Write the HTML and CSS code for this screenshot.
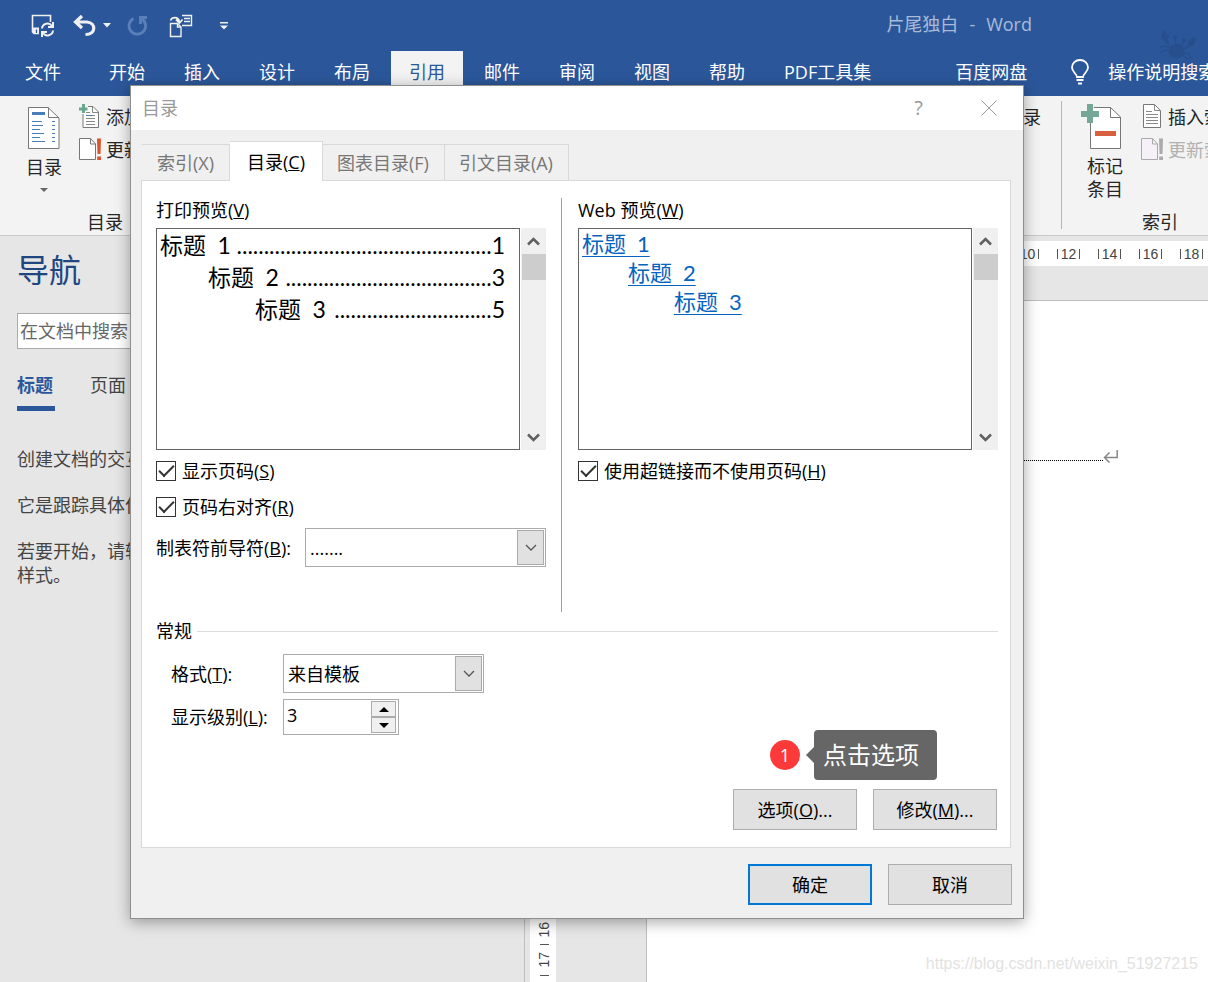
FILE: index.html
```html
<!DOCTYPE html>
<html lang="zh-CN">
<head>
<meta charset="utf-8">
<title>片尾独白 - Word</title>
<link rel="stylesheet" href="styles.css">
</head>
<body>
<div class="app">
  <header class="titlebar">
    <div class="quick">
      <button class="qbtn" aria-label="保存"><svg width="24" height="24" viewBox="0 0 24 24" fill="none" stroke="#f0f0f0" stroke-width="1.600"><path d="M9 19.500H4L2.500 18V1.500H20.500V8"/><path d="M2.500 13.500H9V20H4.500L2.500 18Z" fill="#f0f0f0" stroke="none"/><path d="M6.500 15.500V19" stroke="#2b579a" stroke-width="1.200"/><path d="M12 14.500a5.500 5.500 0 0 1 10-2.500M23 8V13H18M23 16.500a5.500 5.500 0 0 1-10 2.500M12 23V18H17" stroke-width="2"/></svg></button>
      <button class="qbtn" aria-label="撤消"><svg width="24" height="24" viewBox="0 0 24 24" fill="none" stroke="#f0f0f0"><path d="M9 2 2.500 8 9 14M3 8H14C23.500 9 23 20.500 12.500 20.500" stroke-width="3.200"/></svg></button>
      <button class="qbtn" aria-label="撤消列表"><svg width="8" height="5" viewBox="0 0 8 5"><path d="M0 0H8L4 4.500Z" fill="#f0f0f0"/></svg></button>
      <button class="qbtn redo" aria-label="重复" disabled><svg width="22" height="22" viewBox="0 0 22 22" fill="none" stroke="#5b7fb8" stroke-width="2.800"><path d="M6.500 3.500A8.300 8.300 0 1 0 15 4"/><path d="M20 2.500H13.500V9" /></svg></button>
      <button class="qbtn clip" aria-label="粘贴到"><svg width="24" height="24" viewBox="0 0 24 24" fill="none" stroke="#f0f0f0" stroke-width="1.400"><path d="M1.500 9.500H8.500L12 13V22.500H1.500Z"/><path d="M8.500 9.500V13H12M13 1.500H22.500V11.500H13"/><path d="M15 4.500H21M15 7.500H21" stroke-width="1.600"/><path d="M1.500 6.500C3 3 9 2 10.500 8M7 5.500 10.500 9 13.500 5.500" stroke-width="1.800"/></svg></button>
      <button class="qbtn more" aria-label="自定义快速访问工具栏"><svg width="8" height="8" viewBox="0 0 8 8"><path d="M0 0H8V1.500H0ZM0 3.500H8L4 7.500Z" fill="#f0f0f0"/></svg></button>
    </div>
    <div class="doc-title"><span>片尾独白</span><span>-</span><span>Word</span></div>
    <svg class="crab" width="38" height="32" viewBox="0 0 38 32" fill="#274f8d"><path d="M11 25C10 18 14 14 20 15 26 16 28 22 25 27 20 31 13 29 11 25Z"/><path d="M7 1C3 3 2 9 6 11L9 15 12 17 11 13 9 10C12 8 11 5 9 5L8 8ZM37 8C32 9 29 13 30 16L26 19 27 21 32 17C37 17 38 13 37 8L33 13Z"/><circle cx="17" cy="8" r="2"/><circle cx="26" cy="11" r="2"/><path d="M17 9 18 15M26 12 24 16M12 19 6 17 1 19M12 22 6 21 2 24M25 23 31 25 33 30M24 26 28 28 29 31" fill="none" stroke="#274f8d" stroke-width="1.500"/></svg>
  </header>
  <nav class="tabs">
    <button class="tab file">文件</button>
    <button class="tab">开始</button>
    <button class="tab">插入</button>
    <button class="tab">设计</button>
    <button class="tab">布局</button>
    <button class="tab active">引用</button>
    <button class="tab">邮件</button>
    <button class="tab">审阅</button>
    <button class="tab">视图</button>
    <button class="tab">帮助</button>
    <button class="tab pdf">PDF工具集</button>
    <button class="tab">百度网盘</button>
    <button class="tab tell"><svg width="20" height="26" viewBox="0 0 20 26" fill="none" stroke="#fff" stroke-width="1.800"><path d="M7 18C7 15 2 13 2 8.500A8 7.500 0 0 1 18 8.500C18 13 13 15 13 18ZM6.500 21H13.500M8 24.500H12"/></svg>操作说明搜索</button>
  </nav>
  <div class="ribbon">
    <section class="group toc">
      <div class="tools">
        <button class="big"><svg width="34" height="44" viewBox="0 0 34 44" fill="none"><path d="M1.500 1.500H21L32 12V42.500H1.500Z" fill="#fff" stroke="#777"/><path d="M21.500 1.500V11.500H32" stroke="#777"/><path d="M5 6H18V9H5Z" fill="#4a7ebb"/><path d="M5 15.500H15M5 19.500H16M5 23.500H13M5 27.500H17M5 31.500H13M5 35.500H18M25 15.500H28M25 19.500H28M25 23.500H28M25 27.500H28M25 31.500H28M25 35.500H28" stroke="#4a7ebb"/></svg><span>目录</span><svg class="drop" width="8" height="4" viewBox="0 0 8 4"><path d="M0 0H8L4 4Z" fill="#666"/></svg></button>
        <div class="small-list">
          <button class="small"><svg width="22" height="25" viewBox="0 0 22 25" fill="none"><path d="M4 10V23.500H19.500V8L14 2.500H9" fill="#fff" stroke="#777"/><path d="M13.500 3V8.500H19M7 8.500H11M7 11.500H16M7 14.500H16M7 17.500H16M7 20.500H16" stroke="#888"/><path d="M7 11.500H13" stroke="#4a7ebb"/><path d="M3 0H6V3.500H8.500V6.500H6V9H3V6.500H0V3.500H3Z" fill="#69a790"/></svg>添加</button>
          <button class="small"><svg width="22" height="25" viewBox="0 0 22 25" fill="none"><path d="M.500 1.500H11.500L16.500 7V22.500H.500Z" fill="#fff" stroke="#777"/><path d="M11.500 1.500V7H16.500" stroke="#777"/><path d="M18 1.500H22L21.500 17H18.500ZM18.200 19.500H22V23H18.200Z" fill="#d9532c"/></svg>更新</button>
        </div>
      </div>
      <div class="caption">目录</div>
    </section>
    <section class="group middle"><button class="small">录</button></section>
    <section class="group index">
      <div class="tools">
        <button class="big"><svg width="42" height="47" viewBox="0 0 42 47" fill="none"><path d="M10.500 18V45.500H40.500V14L30.500 4.500H14" fill="#fff" stroke="#777"/><path d="M30.500 4.500V14.500H40.500" stroke="#777"/><path d="M7 1H13V8H19V14H13V20H7V14H1V8H7Z" fill="#74a795"/><path d="M15 28H36V33H15Z" fill="#d9603f"/></svg><span>标记<br>条目</span></button>
        <div class="small-list">
          <button class="small"><svg width="22" height="25" viewBox="0 0 22 25" fill="none"><path d="M2.500.500H13.500L19.500 6.500V23.500H2.500Z" fill="#fff" stroke="#777"/><path d="M13.500.500V6.500H19.500M5 7.500H11M5 10.500H17M5 13.500H17M5 16.500H17M5 19.500H17" stroke="#888"/></svg>插入索引</button>
          <button class="small" disabled><svg width="22" height="25" viewBox="0 0 22 25" fill="none"><path d="M.500 1.500H11.500L16.500 7V22.500H.500Z" fill="#f6f1f8" stroke="#aaa"/><path d="M11.500 1.500V7H16.500" stroke="#aaa"/><path d="M18 1.500H22L21.500 17H18.500ZM18.200 19.500H22V23H18.200Z" fill="#aaa"/></svg>更新索引</button>
        </div>
      </div>
      <div class="caption">索引</div>
    </section>
  </div>
  <div class="workspace">
    <aside class="nav-pane">
      <h2 class="nav-title">导航</h2>
      <input class="nav-search" type="text" placeholder="在文档中搜索" aria-label="在文档中搜索">
      <div class="nav-tabs"><button class="nav-tab current">标题</button><button class="nav-tab">页面</button></div>
      <p>创建文档的交互</p>
      <p>它是跟踪具体位</p>
      <p>若要开始，请转<br>样式。</p>
    </aside>
    <main class="editor">
      <div class="h-ruler"><span>10</span><span>12</span><span>14</span><span>16</span><span>18</span></div>
      <div class="canvas">
        <div class="v-ruler"><span>16</span><i></i><span>17</span><i></i></div>
        <article class="sheet">
          <div class="toc-line"><span class="leader"></span><svg width="16" height="14" viewBox="0 0 16 14" fill="none" stroke="#888" stroke-width="1.500"><path d="M14.200 0V7.500H2M6.500 2.500 1.500 7.500 6.500 12.500"/></svg></div>
        </article>
      </div>
    </main>
  </div>

  <div class="dialog" role="dialog" aria-label="目录">
    <div class="dlg-title"><span>目录</span><button class="dlg-help">?</button><button class="dlg-close" aria-label="关闭"><svg width="16" height="16" viewBox="0 0 16 16" fill="none" stroke="#999"><path d="M.500.500 15.500 15.500M15.500.500.500 15.500"/></svg></button></div>
    <div class="dlg-tabs">
      <button class="dtab">索引(X)</button><button class="dtab on">目录(<u>C</u>)</button><button class="dtab">图表目录(F)</button><button class="dtab">引文目录(A)</button>
    </div>
    <div class="panel">
      <div class="columns">
        <section class="col print">
          <h3>打印预览(<u>V</u>)</h3>
          <div class="preview">
            <div class="list">
              <div class="entry"><span>标题&ensp;1</span><span class="dots">...............................................</span><span>1</span></div>
              <div class="entry l2"><span>标题&ensp;2</span><span class="dots">......................................</span><span>3</span></div>
              <div class="entry l3"><span>标题&ensp;3</span><span class="dots">.............................</span><span>5</span></div>
            </div>
            <div class="scroll"><svg width="13" height="9" viewBox="0 0 13 9" fill="none" stroke="#606060" stroke-width="2.500"><path d="M1 7.500 6.500 2 12 7.500"/></svg><div class="thumb"></div><svg class="down" width="13" height="9" viewBox="0 0 13 9" fill="none" stroke="#606060" stroke-width="2.500"><path d="M1 1.500 6.500 7 12 1.500"/></svg></div>
          </div>
          <label class="check"><input type="checkbox" checked><span>显示页码(<u>S</u>)</span></label>
          <label class="check"><input type="checkbox" checked><span>页码右对齐(<u>R</u>)</span></label>
          <div class="leader-row"><label for="lead">制表符前导符(<u>B</u>):</label>
            <div class="combo"><select id="lead"><option>.......</option></select><span class="arrow"><svg width="12" height="8" viewBox="0 0 12 8" fill="none" stroke="#555" stroke-width="1.300"><path d="M1 1 6 6 11 1"/></svg></span></div></div>
        </section>
        <section class="col web">
          <h3>Web 预览(<u>W</u>)</h3>
          <div class="preview">
            <div class="list links">
              <a href="#h1">标题&ensp;1</a>
              <a class="l2" href="#h2">标题&ensp;2</a>
              <a class="l3" href="#h3">标题&ensp;3</a>
            </div>
            <div class="scroll"><svg width="13" height="9" viewBox="0 0 13 9" fill="none" stroke="#606060" stroke-width="2.500"><path d="M1 7.500 6.500 2 12 7.500"/></svg><div class="thumb"></div><svg class="down" width="13" height="9" viewBox="0 0 13 9" fill="none" stroke="#606060" stroke-width="2.500"><path d="M1 1.500 6.500 7 12 1.500"/></svg></div>
          </div>
          <label class="check"><input type="checkbox" checked><span>使用超链接而不使用页码(<u>H</u>)</span></label>
        </section>
      </div>
      <div class="general">
        <h3 class="rule-title">常规</h3>
        <div class="form">
          <label for="fmt">格式(<u>T</u>):</label>
          <div class="combo fmt"><select id="fmt"><option>来自模板</option></select><span class="arrow"><svg width="12" height="8" viewBox="0 0 12 8" fill="none" stroke="#555" stroke-width="1.300"><path d="M1 1 6 6 11 1"/></svg></span></div>
          <label for="lvl">显示级别(<u>L</u>):</label>
          <div class="spin"><input id="lvl" type="text" value="3"><div class="steps"><button aria-label="增加"><svg width="10" height="5" viewBox="0 0 10 5"><path d="M0 5 5 0 10 5Z"/></svg></button><button aria-label="减少"><svg width="10" height="5" viewBox="0 0 10 5"><path d="M0 0 5 5 10 0Z"/></svg></button></div></div>
        </div>
      </div>
      <div class="actions">
        <button class="btn">选项(<u>O</u>)...</button><button class="btn">修改(<u>M</u>)...</button>
        <div class="callout"><span class="num">1</span><span class="tip">点击选项</span></div>
      </div>
    </div>
    <div class="footer"><button class="btn primary">确定</button><button class="btn">取消</button></div>
  </div>
  <div class="watermark">https://blog.csdn.net/weixin_51927215</div>
</div>
</body>
</html>
```
FILE: styles.css
```css
* { box-sizing: border-box; }
body { margin: 0; }
body, button, input, select {
  font-family: "Open Sans", "Noto Sans CJK SC", sans-serif;
  font-size: 18px;
  line-height: 24px;
  color: #262626;
}
button { border: 0; padding: 0; background: none; }
svg { display: block; flex: none; }
h2, h3, p { margin: 0; font-weight: 400; }
h3 { font-size: 18px; line-height: 24px; color: #000; }

.app {
  position: relative;
  display: flex;
  flex-direction: column;
  min-height: 100vh;
  overflow: hidden;
}

/* title bar and ribbon tabs */
.titlebar {
  position: relative;
  display: flex;
  align-items: center;
  justify-content: space-between;
  height: 51px;
  padding: 0 176px 0 30px;
  background: #2b579a;
}
.quick { display: flex; align-items: center; }
.qbtn { display: flex; margin-right: 6px; }
.qbtn:first-child { margin-right: 19px; }
.redo { margin: 0 20px 0 10px; }
.clip { margin-right: 27px; }
.doc-title { display: flex; gap: 11px; color: #a9bbd8; padding-bottom: 4px; }
.crab { position: absolute; right: 12px; top: 29px; }
.tabs {
  display: flex;
  gap: 3px;
  height: 45px;
  padding-left: 7px;
  background: #2b579a;
  white-space: nowrap;
}
.tab { flex: none; display: flex; align-items: center; padding: 0 18px 3px; color: #fff; }
.file { margin-right: 9px; }
.pdf { margin-right: 45px; }
.active { background: #f3f3f3; color: #2b579a; }
.tell { gap: 18px; margin-left: 4px; }

/* ribbon */
.ribbon {
  display: flex;
  height: 140px;
  background: #f3f3f3;
  border-bottom: 1px solid #c8c8c8;
  white-space: nowrap;
}
.group { display: flex; flex-direction: column; justify-content: space-between; }
.toc { flex: none; width: 212px; padding-left: 26px; }
.toc .caption { padding-right: 28px; }
.middle { flex: 1; align-items: flex-end; padding: 9px 20px; }
.index { flex: none; width: 147px; padding-left: 18px; border-left: 1px solid #b5b5b5; margin: 5px 0 6px; }
.index .tools { margin-top: -5px; gap: 11px; }
.index .caption { margin-bottom: -6px; text-align: left; padding-left: 62px; }
.tools { display: flex; gap: 17px; }
.big { flex: none; display: flex; flex-direction: column; align-items: center; line-height: 23px; padding-top: 10px; }
.big span { padding-top: 6px; }
.index .big { width: 50px; padding-top: 7px; }
.index .big span { padding-top: 5px; }
.index .big svg { align-self: flex-start; }
.drop { margin-top: 9px; }
.small-list { flex: none; display: flex; flex-direction: column; gap: 8px; padding-top: 8px; }
.small { display: flex; align-items: center; gap: 5px; color: #262626; }
.small:disabled { color: #b1b1b1; }
.caption { text-align: center; line-height: 26px; }

/* workspace */
.workspace { flex: 1; display: flex; background: #e6e6e6; }
.nav-pane { flex: none; width: 525px; padding: 12px 0 0 17px; border-right: 1px solid #bdbdbd; color: #444; }
.nav-title { font-size: 32px; line-height: 44px; color: #1f4680; }
.nav-search { display: block; width: 490px; height: 36px; margin-top: 21px; padding: 0 2px; border: 1px solid #ababab; background: #fff; }
.nav-search::placeholder { color: #666; opacity: 1; }
.nav-tabs { display: flex; gap: 35px; margin: 22px 0 36px; }
.nav-tab { height: 40px; padding: 0 0 8px; color: #444; border-bottom: 5px solid transparent; }
.nav-tab.current { font-weight: 700; color: #2b579a; border-color: #2b579a; padding-right: 2px; }
.nav-pane p { margin-bottom: 22px; }
.editor { flex: 1; min-width: 0; display: flex; flex-direction: column; padding-top: 5px; }
.h-ruler {
  display: flex;
  justify-content: flex-end;
  gap: 18px;
  height: 25px;
  align-items: center;
  margin-left: 121px;
  padding-right: 5px;
  background: #fff;
  font: 14px/10px "Liberation Sans", sans-serif;
  color: #444;
}
.h-ruler span { width: 23px; text-align: center; border: solid #555; border-width: 0 1px; flex: none; }
.canvas { flex: 1; display: flex; padding-left: 5px; }
.v-ruler {
  display: flex;
  flex-direction: column;
  justify-content: flex-end;
  align-items: center;
  gap: 7px;
  width: 26px;
  padding: 0 0 6px 2px;
  background: #fff;
  font: 14px/16px "Liberation Sans", sans-serif;
  color: #444;
}
.v-ruler span { writing-mode: vertical-rl; transform: rotate(180deg); }
.v-ruler i { width: 9px; height: 1px; background: #555; }
.sheet { flex: 1; margin: 34px 0 0 90px; padding: 149px 89px 0 0; background: #fff; border: solid #bdbdbd; border-width: 1px 0 0 1px; }
.toc-line { display: flex; }
.leader { flex: 1; height: 11px; border-bottom: 1px dotted #000; }

/* dialog window */
.dialog {
  position: absolute;
  left: 130px;
  right: 184px;
  top: 85px;
  background: #f0f0f0;
  border: 1px solid #8f8f8f;
  box-shadow: 0 3px 14px rgba(0, 0, 0, .35);
  color: #000;
}
.dialog button, .dialog label, .dialog select { color: #000; }
.dlg-title { display: flex; align-items: center; height: 44px; padding: 0 26px 0 11px; background: #fff; color: #999; }
.dlg-title span { flex: 1; }
.dialog .dlg-help { color: #999; margin-right: 58px; font-size: 20px; }
.dlg-tabs { display: flex; align-items: flex-end; padding: 11px 0 0 11px; }
.dialog .dtab { height: 36px; padding: 0 15px 0 14px; border: 1px solid #d9d9d9; border-width: 1px 1px 0 0; color: #777; }
.dialog .dtab:first-child { padding-left: 15px; }
.dialog .dtab.on { height: 40px; margin-bottom: -1px; padding: 0 17px; background: #fff; color: #000; position: relative; border-left-width: 0; }
.panel { margin: 0 12px 0 10px; padding: 17px 12px 17px 14px; background: #fff; border: 1px solid #d9d9d9; }
.columns { display: flex; }
.col { min-width: 0; padding-bottom: 45px; }
.print { flex: 390 1 0; padding-right: 15px; border-right: 1px solid #a0a0a0; }
.web { flex: 420 1 0; padding-left: 16px; }
.preview { display: flex; height: 222px; margin: 6px 0 9px; }
.list { flex: 1; min-width: 0; border: 1px solid #646464; padding: 0 14px 0 3px; font-family: Lato, "Noto Sans CJK SC", sans-serif; font-size: 23px; }
.entry { display: flex; line-height: 32px; }
.entry span { flex: none; }
.entry .dots { flex: 1; text-align: right; }
.entry.l2 { padding-left: 48px; }
.entry.l3 { padding-left: 95px; }
.links { display: flex; flex-direction: column; align-items: flex-start; font-size: 22px; }
.links a { color: #0563c1; line-height: 29px; text-decoration-thickness: 1px; text-underline-offset: 4px; }
.links .l2 { margin-left: 46px; }
.links .l3 { margin-left: 92px; }
.scroll { display: flex; flex-direction: column; align-items: center; width: 25px; margin-left: 1px; padding: 9px 0 8px; background: #f0f0f0; }
.thumb { width: 24px; height: 26px; margin-top: 8px; background: #cdcdcd; }
.down { margin-top: auto; }
.check { display: flex; align-items: center; gap: 6px; height: 24px; margin-bottom: 12px; }
.check input {
  appearance: none;
  width: 20px;
  height: 20px;
  margin: 0;
  border: 1px solid #333;
  background: #fff;
  display: grid;
  place-items: center;
}
.check input:checked::before {
  content: "";
  width: 13px;
  height: 6px;
  border: solid #333;
  border-width: 0 0 2px 2px;
  transform: rotate(-45deg);
  margin-bottom: 4px;
}
.leader-row { display: flex; align-items: center; justify-content: space-between; margin-top: -3px; }
.combo { display: grid; width: 241px; height: 39px; border: 1px solid #ababab; background: #fff; }
.combo.fmt { width: 201px; }
.combo select { grid-area: 1 / 1; appearance: none; border: 0; background: transparent; padding: 0 4px; }
.arrow { grid-area: 1 / 1; justify-self: end; width: 27px; margin: 1px; border: 1px solid #ababab; background: #e1e1e1; display: grid; place-items: center; pointer-events: none; }
.general { padding-top: 7px; }
.rule-title { display: flex; align-items: center; gap: 5px; }
.rule-title::after { content: ""; flex: 1; height: 1px; background: #dcdcdc; }
.form { display: grid; grid-template-columns: 112px max-content; gap: 6px 0; align-items: center; padding: 11px 0 0 15px; }
.spin { display: flex; width: 116px; height: 36px; border: 1px solid #ababab; padding: 1px 2px; }
.spin input { flex: 1; min-width: 0; height: 28px; border: 0; padding: 0 1px; color: #000; background: transparent; }
.steps { display: flex; flex-direction: column; width: 25px; }
.steps button { flex: 1; display: grid; place-items: center; border: 1px solid #ababab; background: #f0f0f0; }
.actions { position: relative; display: flex; justify-content: flex-end; gap: 16px; margin-top: 54px; padding-right: 1px; }
.btn { width: 124px; height: 41px; border: 1px solid #adadad; background: #e1e1e1; }
.primary { border: 2px solid #0078d7; }
.callout { position: absolute; right: 61px; bottom: 50px; display: flex; align-items: center; gap: 14px; color: #fff; }
.num { width: 30px; height: 30px; line-height: 30px; border-radius: 50%; background: #fc3a3a; text-align: center; }
.tip { position: relative; width: 123px; padding: 9px; border-radius: 4px; background: #666; font-size: 24px; line-height: 32px; }
.tip::before { content: ""; position: absolute; left: -8px; top: 17px; border: solid transparent; border-width: 8px 8px 8px 0; border-right-color: #666; }
.footer { display: flex; justify-content: flex-end; gap: 16px; padding: 16px 11px 13px; }
.watermark { position: absolute; right: 10px; bottom: 8px; font: 16px/20px "Liberation Sans", sans-serif; color: #e2e2e2; }
```
